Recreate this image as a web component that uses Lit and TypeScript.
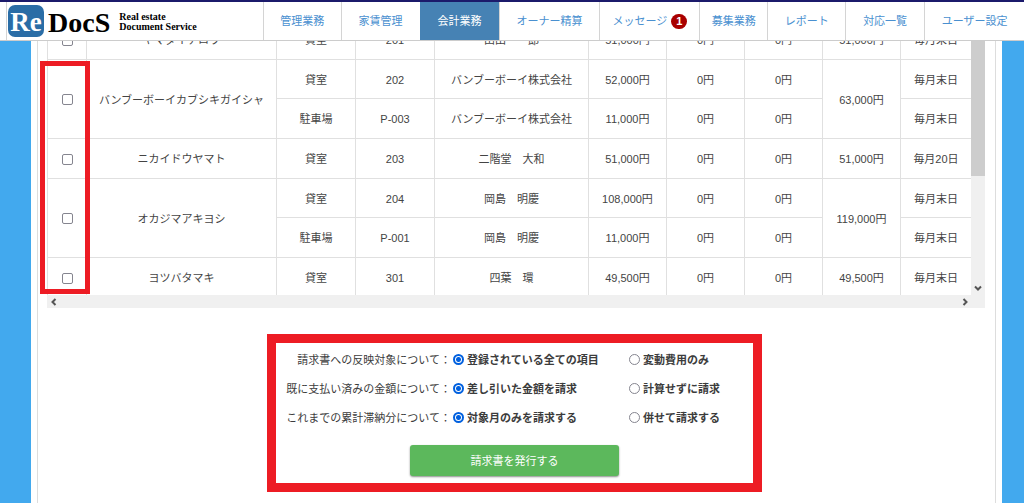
import { LitElement, html, css, nothing } from "lit";
import { customElement, property, state } from "lit/decorators.js";
import { classMap } from "lit/directives/class-map.js";

const FONT = css`"Liberation Sans", "Noto Sans CJK JP", sans-serif`;

interface NavItem {
  label: string;
  active?: boolean;
  badge?: number;
}

interface Contract {
  kind: string;
  room: string;
  name: string;
  rent: string;
  due: string;
}

interface Tenant {
  kana: string;
  total: string;
  contracts: Contract[];
}

const NAV: NavItem[] = [
  { label: "管理業務" },
  { label: "家賃管理" },
  { label: "会計業務", active: true },
  { label: "オーナー精算" },
  { label: "メッセージ", badge: 1 },
  { label: "募集業務" },
  { label: "レポート" },
  { label: "対応一覧" },
  { label: "ユーザー設定" },
];

const TENANTS: Tenant[] = [
  {
    kana: "ヤマダイチロウ",
    total: "51,000円",
    contracts: [{ kind: "貸室", room: "201", name: "山田　一郎", rent: "51,000円", due: "毎月末日" }],
  },
  {
    kana: "バンブーボーイカブシキガイシャ",
    total: "63,000円",
    contracts: [
      { kind: "貸室", room: "202", name: "バンブーボーイ株式会社", rent: "52,000円", due: "毎月末日" },
      { kind: "駐車場", room: "P-003", name: "バンブーボーイ株式会社", rent: "11,000円", due: "毎月末日" },
    ],
  },
  {
    kana: "ニカイドウヤマト",
    total: "51,000円",
    contracts: [{ kind: "貸室", room: "203", name: "二階堂　大和", rent: "51,000円", due: "毎月20日" }],
  },
  {
    kana: "オカジマアキヨシ",
    total: "119,000円",
    contracts: [
      { kind: "貸室", room: "204", name: "岡島　明慶", rent: "108,000円", due: "毎月末日" },
      { kind: "駐車場", room: "P-001", name: "岡島　明慶", rent: "11,000円", due: "毎月末日" },
    ],
  },
  {
    kana: "ヨツバタマキ",
    total: "49,500円",
    contracts: [{ kind: "貸室", room: "301", name: "四葉　環", rent: "49,500円", due: "毎月末日" }],
  },
];

const OPTIONS = [
  { name: "target", title: "請求書への反映対象について", choices: ["登録されている全ての項目", "変動費用のみ"] },
  { name: "paid", title: "既に支払い済みの金額について", choices: ["差し引いた金額を請求", "計算せずに請求"] },
  { name: "arrears", title: "これまでの累計滞納分について", choices: ["対象月のみを請求する", "併せて請求する"] },
];

@customElement("site-header")
class SiteHeader extends LitElement {
  static styles = css`
    :host {
      display: block;
      position: sticky;
      top: 0;
      z-index: 2;
      font: 11px/16px ${FONT};
      background: #fff;
      border-top: 2px solid #1b1a6b;
      border-bottom: 1px solid #ccc;
      padding-left: 6px;
    }
    .bar {
      display: grid;
      grid-template-columns: 257fr 78fr 79fr 79fr 101fr 100fr 68fr 78fr 79fr 100fr;
      height: 38px;
    }
    .logo {
      display: flex;
      align-items: center;
      border-left: 1px solid #d4d4d4;
      padding-left: 1px;
      color: #000;
      text-decoration: none;
      font-family: "Liberation Serif", serif;
      font-weight: bold;
    }
    .mark {
      width: 36px;
      height: 32px;
      border-radius: 7px;
      background: #2a6da6;
      color: #fff;
      font-size: 27px;
      line-height: 34px;
      text-align: center;
    }
    .word {
      font-size: 28px;
      line-height: 32px;
      margin-left: 4px;
      padding-top: 3px;
    }
    .tag {
      font-size: 10px;
      line-height: 10px;
      margin-left: 9px;
      padding-top: 2px;
      white-space: nowrap;
    }
    .item {
      display: flex;
      align-items: center;
      justify-content: center;
      gap: 4px;
      border-left: 1px solid #d4d4d4;
      color: #4a90d0;
      text-decoration: none;
      white-space: nowrap;
    }
    .active {
      background: #4682b4;
      border-color: #4682b4;
      color: #fff;
    }
    .badge {
      background: #a90000;
      color: #fff;
      font-weight: bold;
      line-height: 15px;
      border-radius: 8px;
      padding: 0 5px;
    }
  `;

  render() {
    return html`
      <nav class="bar">
        <a class="logo" href="#">
          <span class="mark">Re</span>
          <span class="word">DocS</span>
          <span class="tag">Real estate<br />Document Service</span>
        </a>
        ${NAV.map(
          (n) => html`<a class=${classMap({ item: true, active: !!n.active })} href="#"
            >${n.label}${n.badge ? html`<span class="badge">${n.badge}</span>` : nothing}</a
          >`
        )}
      </nav>
    `;
  }
}

@customElement("billing-table")
class BillingTable extends LitElement {
  @property({ attribute: false }) tenants: Tenant[] = [];

  static styles = css`
    :host {
      display: block;
      position: relative;
      font: 11px/16px ${FONT};
      color: #444;
    }
    .frame {
      display: grid;
      grid-template-columns: minmax(0, 1fr) 14px;
      grid-template-rows: 275px 13px;
    }
    .view {
      overflow: hidden;
    }
    table {
      width: 100%;
      table-layout: fixed;
      border-collapse: separate;
      border-spacing: 0;
    }
    td {
      box-sizing: border-box;
      height: 40px;
      padding: 1px 0 0;
      text-align: center;
      vertical-align: middle;
      white-space: nowrap;
      border-left: 1px solid #e0e0e0;
      border-bottom: 1px solid #e0e0e0;
    }
    .paired td {
      height: 39px;
    }
    .c-check { width: 39px; }
    .c-kana { width: 190px; }
    .c-short { width: 79px; }
    .c-name { width: 154px; }
    .c-money { width: 78px; }
    .c-due { width: 71px; }
    input {
      display: block;
      appearance: none;
      box-sizing: border-box;
      width: 11px;
      height: 11px;
      margin: 0 auto;
      border: 1px solid #85858f;
      border-radius: 2px;
      background: #fff;
    }
    input:checked {
      background: #0060df;
    }
    .vbar {
      display: flex;
      flex-direction: column;
      justify-content: space-between;
      align-items: center;
      background: #f0f0f0;
    }
    .thumb {
      width: 100%;
      height: 156px;
      background: #cdcdcd;
    }
    .hbar {
      grid-column: 1 / -1;
      display: flex;
      justify-content: space-between;
      align-items: center;
      padding: 0 16px 0 3px;
      background: #f0f0f0;
    }
    .arrow {
      display: block;
      width: 8px;
      height: 8px;
      fill: none;
      stroke: #555;
      stroke-width: 2;
    }
    .vbar .arrow {
      margin-bottom: 3px;
    }
    .marker {
      position: absolute;
      box-sizing: border-box;
      left: -7px;
      top: 41px;
      width: 50px;
      height: 233px;
      border: 5px solid #ed1c24;
      pointer-events: none;
    }
  `;

  private rows(t: Tenant) {
    const span = t.contracts.length;
    return t.contracts.map(
      (c, i) => html`<tr class=${classMap({ paired: span > 1 && i === 0 })}>
        ${i === 0
          ? html`<td rowspan=${span}><input type="checkbox" aria-label=${t.kana} /></td>
              <td rowspan=${span}>${t.kana}</td>`
          : nothing}
        <td>${c.kind}</td>
        <td>${c.room}</td>
        <td>${c.name}</td>
        <td>${c.rent}</td>
        <td>0円</td>
        <td>0円</td>
        ${i === 0 ? html`<td rowspan=${span}>${t.total}</td>` : nothing}
        <td>${c.due}</td>
      </tr>`
    );
  }

  render() {
    return html`
      <div class="frame">
        <div class="view">
          <table>
            <colgroup>
              <col class="c-check" />
              <col class="c-kana" />
              <col class="c-short" />
              <col class="c-short" />
              <col class="c-name" />
              <col class="c-money" />
              <col class="c-money" />
              <col class="c-money" />
              <col class="c-money" />
              <col class="c-due" />
            </colgroup>
            <tbody>
              ${this.tenants.map((t) => this.rows(t))}
            </tbody>
          </table>
        </div>
        <div class="vbar">
          <div class="thumb"></div>
          <svg class="arrow" viewBox="0 0 8 8"><path d="M1 2.5 4 5.5 7 2.5" /></svg>
        </div>
        <div class="hbar">
          <svg class="arrow" viewBox="0 0 8 8"><path d="M5.5 1 2.5 4 5.5 7" /></svg>
          <svg class="arrow" viewBox="0 0 8 8"><path d="M2.5 1 5.5 4 2.5 7" /></svg>
        </div>
      </div>
      <div class="marker"></div>
    `;
  }
}

@customElement("invoice-form")
class InvoiceForm extends LitElement {
  @state() private picked: Record<string, number> = { target: 0, paid: 0, arrears: 0 };

  static styles = css`
    :host {
      display: block;
      font: 11px/16px ${FONT};
      color: #3c3c3c;
    }
    form {
      box-sizing: border-box;
      max-width: 495px;
      margin: 0 auto;
      padding: 2px 0 7px;
      border: 9px solid #ed1c24;
    }
    .row {
      display: grid;
      grid-template-columns: 175px 176px 1fr;
      align-items: center;
      height: 29px;
      margin: 0;
      white-space: nowrap;
    }
    .title {
      text-align: right;
    }
    .choice {
      display: flex;
      align-items: center;
      gap: 3px;
      padding-left: 2px;
      font-weight: bold;
    }
    input {
      appearance: none;
      box-sizing: border-box;
      width: 11px;
      height: 11px;
      margin: 0;
      border: 1px solid #85858f;
      border-radius: 50%;
      background: #fff;
    }
    input:checked {
      border: 2px solid #0060df;
      background: radial-gradient(circle, #0060df 2px, #fff 3px);
    }
    button {
      display: block;
      width: 209px;
      height: 31px;
      margin: 13px auto 0;
      padding: 0;
      border: 0;
      border-radius: 3px;
      background: #5cb85c;
      box-shadow: 0 1px 2px rgba(0, 0, 0, 0.45);
      color: #fff;
      font: inherit;
    }
  `;

  render() {
    return html`
      <form @submit=${(e: Event) => e.preventDefault()}>
        ${OPTIONS.map(
          (o) => html`<div class="row" role="radiogroup" aria-label=${o.title}>
            <span class="title">${o.title}：</span>
            ${o.choices.map(
              (c, i) => html`<label class="choice"
                ><input
                  type="radio"
                  name=${o.name}
                  .checked=${this.picked[o.name] === i}
                  @change=${() => (this.picked = { ...this.picked, [o.name]: i })}
                />${c}</label
              >`
            )}
          </div>`
        )}
        <button type="submit">請求書を発行する</button>
      </form>
    `;
  }
}

@customElement("app-root")
class AppRoot extends LitElement {
  static styles = css`
    :host {
      display: flex;
      flex-direction: column;
      min-height: 100vh;
      background: #42a9ee;
    }
    main {
      flex: 1;
      display: flex;
      margin: -21px 22px 0 31px;
      padding: 0 6px;
      background: #fff;
    }
    .panel {
      flex: 1;
      min-width: 0;
      padding: 0 10px 11px 9px;
      border: solid #ddd;
      border-width: 0 1px;
    }
    invoice-form {
      margin: 26px 3px 0 0;
    }
  `;

  render() {
    return html`
      <site-header></site-header>
      <main>
        <div class="panel">
          <billing-table .tenants=${TENANTS}></billing-table>
          <invoice-form></invoice-form>
        </div>
      </main>
    `;
  }
}
